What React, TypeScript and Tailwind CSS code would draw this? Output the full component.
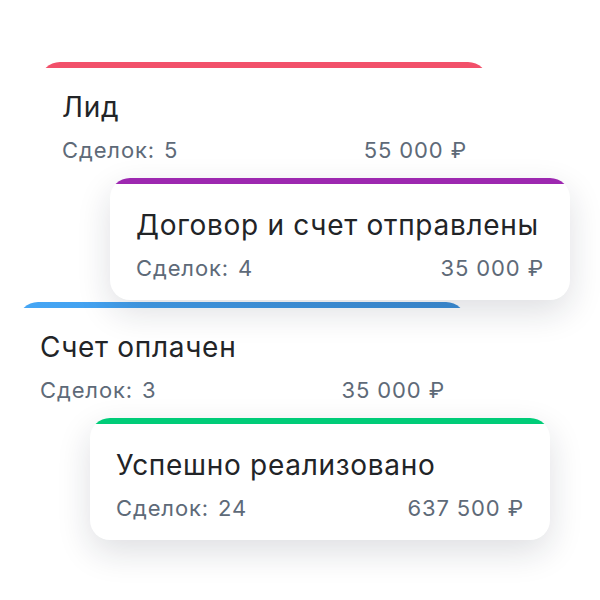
const deals = [
  { title: "Лид", count: 5, sum: "55 000 ₽", band: "bg-[#f2506a]", front: false, ml: "ml-[40px]", mt: "mt-[62px]" },
  { title: "Договор и счет отправлены", count: 4, sum: "35 000 ₽", band: "bg-[#9d28b0]", front: true, ml: "ml-[110px]", mt: "-mt-[6px]" },
  { title: "Счет оплачен", count: 3, sum: "35 000 ₽", band: "bg-gradient-to-r from-[#45a6f5] to-[#3b8dd6]", front: false, ml: "ml-[18px]", mt: "mt-[2px]" },
  { title: "Успешно реализовано", count: 24, sum: "637 500 ₽", band: "bg-[#00cc78]", front: true, ml: "ml-[90px]", mt: "-mt-[6px]" },
]

function Card({ d }: { d: (typeof deals)[number] }) {
  return (
    <div
      className={`${d.ml} ${d.mt} relative h-[122px] overflow-hidden rounded-[20px] bg-white ${
        d.front ? "z-10 w-[460px] shadow-[0_12px_34px_rgba(20,30,50,0.14)]" : "z-0 w-[448px]"
      }`}
    >
      <div className={`h-[6px] ${d.band}`} />
      <div className={d.front ? "px-[26px] pt-[24px]" : "pl-[22px] pr-[21px] pt-[22px]"}>
        <div className="text-[28px] leading-[34px] tracking-[0.025em] text-[#222427]">{d.title}</div>
        <div className="mt-[13px] flex justify-between text-[22px] leading-[26px] tracking-[0.04em] text-[#5e6a78]">
          <span>
            Сделок:<span className="ml-[9px]">{d.count}</span>
          </span>
          <span>{d.sum}</span>
        </div>
      </div>
    </div>
  )
}

export default function App() {
  return (
    <div className="h-[600px] w-[600px] overflow-hidden bg-white font-['Inter',sans-serif]">
      <div className="flex flex-col items-start">
        {deals.map((d) => (
          <Card key={d.title} d={d} />
        ))}
      </div>
    </div>
  )
}
